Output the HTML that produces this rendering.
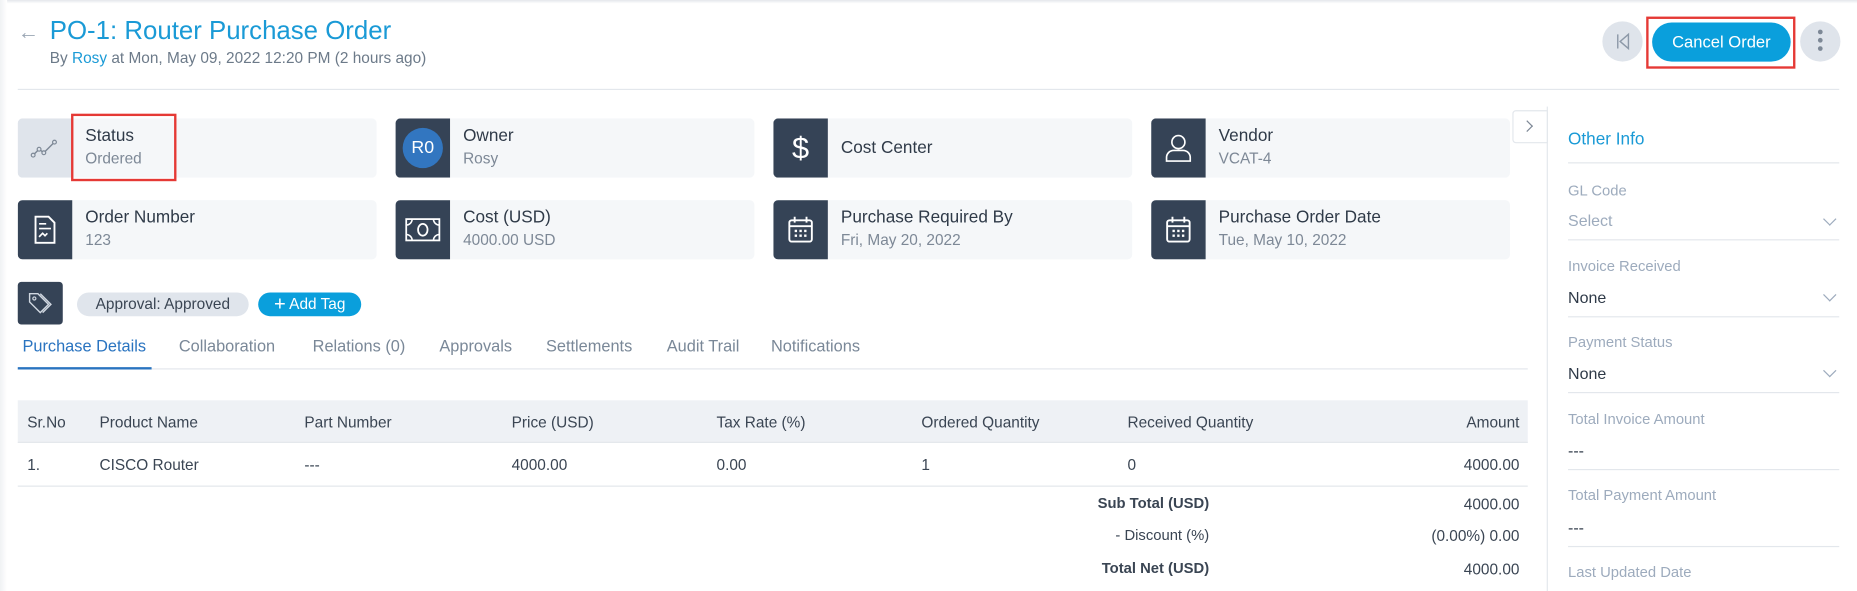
<!DOCTYPE html>
<html><head><meta charset="utf-8"><style>
*{margin:0;padding:0;box-sizing:border-box}
html,body{width:1857px;height:591px;overflow:hidden;background:#fff;font-family:"Liberation Sans",sans-serif}
#w{position:absolute;left:0;top:0;width:1568px;height:499px;transform:scale(1.18431);transform-origin:0 0}
.a{position:absolute;white-space:nowrap}
.card{position:absolute;width:303px;height:50px;background:#f5f7f9;border-radius:4px;overflow:hidden}
.ic{position:absolute;left:0;top:0;width:46px;height:50px;background:#354356;display:flex;align-items:center;justify-content:center}
.ct{position:absolute;left:57px;top:7px;font-size:14.5px;color:#2f3a48}
.cv{position:absolute;left:57px;top:26px;font-size:13px;color:#7d8896}
.tab{position:absolute;top:285px;font-size:13.8px;color:#7a8898}
.th{position:absolute;top:349px;font-size:13px;color:#3a4553}
.td{position:absolute;top:385px;font-size:13px;color:#3a4553}
.sl{position:absolute;left:1324px;font-size:12.5px;color:#9dabbd}
.sv{position:absolute;left:1324px;font-size:13.5px;color:#2f3a48}
.ln{position:absolute;left:1324px;width:229px;height:1px;background:#e3e7ec}
.ch{position:absolute;left:1541px;width:8px;height:8px;border-right:1px solid #9dabbd;border-bottom:1px solid #9dabbd;transform:rotate(45deg)}
</style></head><body><div id="w">
<div class="a" style="left:0;top:0;width:1568px;height:3px;background:linear-gradient(#e4e7eb,#fff)"></div>
<div class="a" style="left:0;top:0;width:6px;height:499px;background:linear-gradient(90deg,#f0f2f4,#fff)"></div>
<div class="a" style="left:15px;top:17px;font-size:18px;color:#9aa6b4">←</div>
<div class="a" style="left:42px;top:13px;font-size:21.8px;color:#1a9ad6">PO-1: Router Purchase Order</div>
<div class="a" style="left:42px;top:41px;font-size:13px;color:#6c7a89">By <span style="color:#1a9ad6">Rosy</span> at Mon, May 09, 2022 12:20 PM (2 hours ago)</div>
<div class="a" style="left:1353px;top:18px;width:34px;height:34px;border-radius:50%;background:#dfe4eb"></div>
<svg class="a" style="left:1362px;top:27px" width="16" height="16" viewBox="0 0 16 16"><path d="M4 2v12M13 2L6 8l7 6z" fill="none" stroke="#8d99a8" stroke-width="1.2"/></svg>
<div class="a" style="left:1390px;top:14px;width:126px;height:44px;border:2px solid #e53935"></div>
<div class="a" style="left:1395px;top:19px;width:117px;height:33px;border-radius:17px;background:#0a9fdc;color:#fff;font-size:14px;text-align:center;line-height:33px">Cancel Order</div>
<div class="a" style="left:1520px;top:18px;width:34px;height:34px;border-radius:50%;background:#dfe4eb"></div>
<div class="a" style="left:1535px;top:25px;width:4px;height:4px;border-radius:50%;background:#7d8896;box-shadow:0 7px 0 #7d8896,0 14px 0 #7d8896"></div>
<div class="a" style="left:15px;top:75px;width:1538px;height:1px;background:#e3e7ec"></div>

<div class="card" style="left:15px;top:100px"><div class="ic" style="background:#dfe4eb"><svg width="26" height="18" viewBox="0 0 26 18"><path d="M3 15l5-5 4 3 9-9" fill="none" stroke="#7d8896" stroke-width="1.2"/><circle cx="3" cy="15" r="1.6" fill="#dfe4eb" stroke="#7d8896"/><circle cx="8" cy="10" r="1.6" fill="#dfe4eb" stroke="#7d8896"/><circle cx="12" cy="13" r="1.6" fill="#dfe4eb" stroke="#7d8896"/><circle cx="21" cy="4" r="1.6" fill="#dfe4eb" stroke="#7d8896"/></svg></div><div class="ct">Status</div><div class="cv">Ordered</div></div>
<div class="a" style="left:60px;top:96px;width:89px;height:57px;border:2px solid #e53935"></div>
<div class="card" style="left:334px;top:100px"><div class="ic"><div style="width:34px;height:34px;border-radius:50%;background:#3276c0;color:#fff;font-size:15px;text-align:center;line-height:34px">R0</div></div><div class="ct">Owner</div><div class="cv">Rosy</div></div>
<div class="card" style="left:653px;top:100px"><div class="ic"><span style="color:#fff;font-size:26px;font-weight:300">$</span></div><div class="ct" style="top:17px">Cost Center</div></div>
<div class="card" style="left:972px;top:100px"><div class="ic"><svg width="24" height="26" viewBox="0 0 24 26"><circle cx="12" cy="8" r="5.5" fill="none" stroke="#fff" stroke-width="1.4"/><path d="M2 24v-3a6 6 0 0 1 6-6h8a6 6 0 0 1 6 6v3z" fill="none" stroke="#fff" stroke-width="1.4"/></svg></div><div class="ct">Vendor</div><div class="cv">VCAT-4</div></div>

<div class="card" style="left:15px;top:169px"><div class="ic"><svg width="20" height="24" viewBox="0 0 20 24"><path d="M2 1h11l5 5v17H2z" fill="none" stroke="#fff" stroke-width="1.6"/><path d="M5 7h6M5 11h10M5 18l3-3 2 2 2-2" fill="none" stroke="#fff" stroke-width="1.4"/></svg></div><div class="ct">Order Number</div><div class="cv">123</div></div>
<div class="card" style="left:334px;top:169px"><div class="ic"><svg width="30" height="22" viewBox="0 0 30 22"><rect x="1" y="2" width="28" height="18" fill="none" stroke="#fff" stroke-width="1.5"/><path d="M1 7a5 5 0 0 0 5-5M24 2a5 5 0 0 0 5 5M1 15a5 5 0 0 1 5 5M24 20a5 5 0 0 1 5-5" fill="none" stroke="#fff" stroke-width="1.3"/><ellipse cx="15" cy="11" rx="4" ry="5" fill="none" stroke="#fff" stroke-width="1.5"/></svg></div><div class="ct">Cost (USD)</div><div class="cv">4000.00 USD</div></div>
<div class="card" style="left:653px;top:169px"><div class="ic"><svg width="22" height="24" viewBox="0 0 22 24"><rect x="1.5" y="4" width="19" height="18" rx="2" fill="none" stroke="#fff" stroke-width="1.6"/><path d="M6 1v5M16 1v5M1.5 9h19" stroke="#fff" stroke-width="1.6"/><path d="M6 13h2M10 13h2M14 13h2M6 17h2M10 17h2M14 17h2" stroke="#fff" stroke-width="2"/></svg></div><div class="ct">Purchase Required By</div><div class="cv">Fri, May 20, 2022</div></div>
<div class="card" style="left:972px;top:169px"><div class="ic"><svg width="22" height="24" viewBox="0 0 22 24"><rect x="1.5" y="4" width="19" height="18" rx="2" fill="none" stroke="#fff" stroke-width="1.6"/><path d="M6 1v5M16 1v5M1.5 9h19" stroke="#fff" stroke-width="1.6"/><path d="M6 13h2M10 13h2M14 13h2M6 17h2M10 17h2M14 17h2" stroke="#fff" stroke-width="2"/></svg></div><div class="ct">Purchase Order Date</div><div class="cv">Tue, May 10, 2022</div></div>

<div class="a" style="left:15px;top:238px;width:38px;height:36px;background:#354356;border-radius:3px"></div>
<svg class="a" style="left:23px;top:246px" width="22" height="20" viewBox="0 0 22 20"><path d="M2 2h7l9 9-7 7-9-9z" fill="none" stroke="#d0d7e0" stroke-width="1.2"/><path d="M11 2l9 9-7 7" fill="none" stroke="#d0d7e0" stroke-width="1.2"/><circle cx="6" cy="6" r="1.3" fill="none" stroke="#d0d7e0"/></svg>
<div class="a" style="left:65px;top:247px;width:145px;height:20px;border-radius:10px;background:#e0e5ec;font-size:13px;color:#3a4553;text-align:center;line-height:20px">Approval: Approved</div>
<div class="a" style="left:218px;top:247px;width:87px;height:20px;border-radius:10px;background:#0a9fdc;font-size:13px;color:#fff;text-align:center;line-height:20px"><span style="font-size:17px;vertical-align:-1px">+</span> Add Tag</div>

<div class="tab" style="left:19px;color:#2a74c0">Purchase Details</div>
<div class="tab" style="left:151px">Collaboration</div>
<div class="tab" style="left:264px">Relations (0)</div>
<div class="tab" style="left:371px">Approvals</div>
<div class="tab" style="left:461px">Settlements</div>
<div class="tab" style="left:563px">Audit Trail</div>
<div class="tab" style="left:651px">Notifications</div>
<div class="a" style="left:15px;top:311px;width:1275px;height:1px;background:#e3e7ec"></div>
<div class="a" style="left:15px;top:310px;width:113px;height:2px;background:#2a74c0"></div>

<div class="a" style="left:15px;top:338px;width:1275px;height:36px;background:#eef1f5;border-bottom:1px solid #e3e7ec"></div>
<div class="th" style="left:23px">Sr.No</div><div class="th" style="left:84px">Product Name</div><div class="th" style="left:257px">Part Number</div><div class="th" style="left:432px">Price (USD)</div><div class="th" style="left:605px">Tax Rate (%)</div><div class="th" style="left:778px">Ordered Quantity</div><div class="th" style="left:952px">Received Quantity</div><div class="th" style="right:285px">Amount</div>
<div class="td" style="left:23px">1.</div><div class="td" style="left:84px">CISCO Router</div><div class="td" style="left:257px">---</div><div class="td" style="left:432px">4000.00</div><div class="td" style="left:605px">0.00</div><div class="td" style="left:778px">1</div><div class="td" style="left:952px">0</div><div class="td" style="right:285px">4000.00</div>
<div class="a" style="left:15px;top:410px;width:1275px;height:1px;background:#e3e7ec"></div>
<div class="td" style="top:418px;right:547px;font-weight:bold;font-size:12.5px">Sub Total (USD)</div><div class="td" style="top:418px;right:285px">4000.00</div>
<div class="td" style="top:445px;right:547px;font-size:12.5px">- Discount (%)</div><div class="td" style="top:445px;right:285px">(0.00%) 0.00</div>
<div class="td" style="top:473px;right:547px;font-weight:bold;font-size:12.5px">Total Net (USD)</div><div class="td" style="top:473px;right:285px">4000.00</div>

<div class="a" style="left:1306px;top:90px;width:1px;height:409px;background:#e3e7ec"></div>
<div class="a" style="left:1277px;top:93px;width:30px;height:28px;background:#fff;border:1px solid #e3e7ec;border-radius:3px 0 0 3px"></div>
<div class="a" style="left:1286px;top:103px;width:7px;height:7px;border-right:1px solid #7d8896;border-top:1px solid #7d8896;transform:rotate(45deg)"></div>
<div class="a" style="left:1324px;top:110px;font-size:14.5px;color:#1a9ad6">Other Info</div>
<div class="ln" style="top:137px"></div>
<div class="sl" style="top:154px">GL Code</div><div class="sv" style="top:179px;color:#9dabbd">Select</div><div class="ch" style="top:181px"></div><div class="ln" style="top:202px"></div>
<div class="sl" style="top:218px">Invoice Received</div><div class="sv" style="top:244px">None</div><div class="ch" style="top:245px"></div><div class="ln" style="top:267px"></div>
<div class="sl" style="top:282px">Payment Status</div><div class="sv" style="top:308px">None</div><div class="ch" style="top:309px"></div><div class="ln" style="top:331px"></div>
<div class="sl" style="top:347px">Total Invoice Amount</div><div class="sv" style="top:373px">---</div><div class="ln" style="top:396px"></div>
<div class="sl" style="top:411px">Total Payment Amount</div><div class="sv" style="top:438px">---</div><div class="ln" style="top:461px"></div>
<div class="sl" style="top:476px">Last Updated Date</div>
</div></body></html>
